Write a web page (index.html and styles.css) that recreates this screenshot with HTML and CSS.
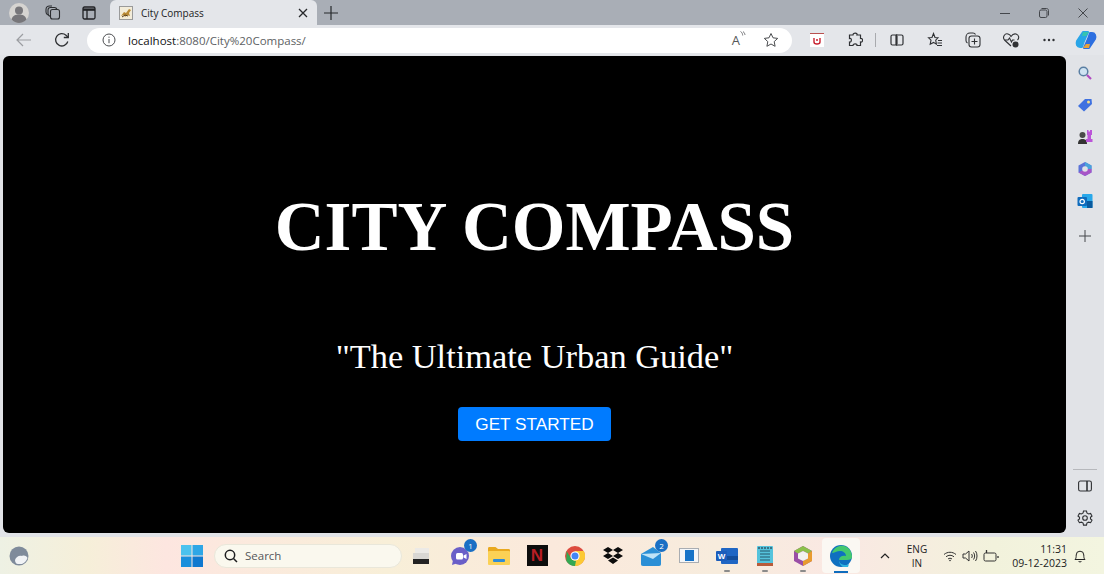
FILE: index.html
```html
<!DOCTYPE html>
<html lang="en">
  <head>
    <meta charset="UTF-8" />
    <meta name="viewport" content="width=device-width, initial-scale=1.0" />
    <title>City Compass</title>
    <link rel="stylesheet" href="styles.css">
  </head>
  <body>
    <div class="titlebar">
      <div class="slot-left">
        <svg class="avatar" viewBox="0 0 20 20" width="20" height="20"><circle cx="10" cy="10" r="10" fill="#d6d4d1"/><circle cx="10" cy="7.500" r="4" fill="#77767a"/><path d="M2.500 16.500c1-4 4-5 7.500-5s6.500 1 7.500 5c-2 2.200-4.500 3.500-7.500 3.500s-5.500-1.300-7.500-3.500z" fill="#77767a"/></svg>
        <svg class="tb-icon" viewBox="0 0 16 16" width="16" height="16" fill="none" stroke="#2b2d30" stroke-width="1.100"><rect x="5.500" y="4.500" width="9" height="9.500" rx="2"/><path d="M5.500 11.500c-1.500-.5-2.500-1.500-2.500-3V5c0-1.500 1-2.500 2.500-2.500h4c1 0 2 .5 2.500 2"/><path d="M3 10C1.800 9.500 1 8.500 1 7V4.500C1 2.500 2.500 1 4.500 1H7"/></svg>
        <svg class="tb-icon" viewBox="0 0 14 14" width="14" height="14" fill="none" stroke="#202124" stroke-width="1.300"><rect x="1" y="1" width="12" height="12" rx="1.500"/><path d="M1 3.600h12" stroke-width="2.400"/><path d="M5 4v9"/></svg>
      </div>
      <div class="tab">
        <svg class="favicon" viewBox="0 0 14 14" width="14" height="14"><rect x=".5" y=".5" width="13" height="13" fill="#f3ecd9" stroke="#9a9a9a"/><path d="M2 10l3-4 2 1 3-4 2 1-2 3 1 3-3-1-2 2-1-2z" fill="#b98a35"/><path d="M3 11l3-2 3 1" fill="none" stroke="#5a3d18"/></svg>
        <span class="tab-title">City Compass</span>
        <svg class="tab-close" viewBox="0 0 10 10" width="10" height="10" stroke="#26282b" stroke-width="1.300"><path d="M1 1l8 8M9 1L1 9"/></svg>
      </div>
      <svg class="new-tab" viewBox="0 0 14 14" width="14" height="14" stroke="#26282b" stroke-width="1.200"><path d="M7 0v14M0 7h14"/></svg>
      <div class="window-controls">
        <svg viewBox="0 0 10 10" width="10" height="10" stroke="#44474c"><path d="M0 5.500h10"/></svg>
        <svg viewBox="0 0 10 10" width="10" height="10" fill="none" stroke="#44474c"><rect x=".5" y="2" width="7.500" height="7.500" rx="1.500"/><path d="M2.500.5h5c1.200 0 2 .8 2 2v5"/></svg>
        <svg viewBox="0 0 10 10" width="10" height="10" stroke="#44474c"><path d="M.5.500l9 9M9.500.500l-9 9"/></svg>
      </div>
    </div>

    <div class="toolbar">
      <svg class="nav-back" viewBox="0 0 16 14" width="16" height="14" fill="none" stroke="#9b9da1" stroke-width="1.200"><path d="M15 7H1M7 1L1 7l6 6"/></svg>
      <svg class="nav-reload" viewBox="0 0 16 16" width="16" height="16" fill="none" stroke="#2f3134" stroke-width="1.300"><path d="M13.800 9.500A6.200 6.200 0 1 1 12 3.200L14 5.200"/><path d="M14.300 1v4.500H9.800"/></svg>
      <div class="address">
        <svg class="info" viewBox="0 0 14 14" width="14" height="14" fill="none" stroke="#4b4d50"><circle cx="7" cy="7" r="6"/><path d="M7 6v4.200M7 3.600v1.200"/></svg>
        <span class="url"><b>localhost</b>:8080/City%20Compass/</span>
        <div class="address-end">
          <span class="read-aloud">A<svg viewBox="0 0 6 7" width="6" height="7" fill="none" stroke="#55575a" stroke-width=".8"><path d="M.5.500c2 1 2 3 2.200 4M3 .5c1.500 1 1.800 2.500 2 3.500"/></svg></span>
          <svg viewBox="0 0 16 16" width="16" height="16" fill="none" stroke="#4b4d50"><path d="M8 1.500l2 4.300 4.700.6-3.500 3.200.9 4.700L8 12l-4.100 2.300.9-4.700L1.300 6.400 6 5.800z"/></svg>
        </div>
      </div>
      <div class="tools">
        <span class="tool"><span class="ext-red"><svg viewBox="0 0 8 8" width="8" height="8" fill="none" stroke="#c8202f" stroke-width="1.400"><path d="M1 1v4c0 1.500 1 2 3 2s3-.5 3-2V1M3 3h2"/></svg></span></span>
        <span class="tool"><svg viewBox="0 0 16 16" width="16" height="16" fill="none" stroke="#2f3134" stroke-width="1.200"><path d="M6 3c0-3 5-2 4 0h3.500v3.500c3-.5 2.500 4.500 0 3.500v3.500H10c.5-2-4-2.500-4 0H2.500V10c2.500.5 2.500-4.500 0-3.500V3z"/></svg></span>
        <span class="tool-sep"></span>
        <span class="tool"><svg viewBox="0 0 14 12" width="14" height="12" fill="none" stroke="#2f3134" stroke-width="1.200"><path d="M6 1H2.500C1.500 1 1 1.500 1 2.500v7c0 1 .5 1.500 1.500 1.500H6zM7 0v12M8 1h3.500c1 0 1.500.5 1.500 1.500v7c0 1-.5 1.500-1.500 1.500H8"/></svg></span>
        <span class="tool"><svg viewBox="0 0 16 16" width="16" height="16" fill="none" stroke="#2f3134" stroke-width="1.100"><path d="M6.500 1.500L8 5.500l3 .3-2.300 2.400.7 4-2.900-1.800-3.300 1.800.8-4L1.500 5.800l3.500-.3zM11 8.500h4M10.500 11h4.500M10 13.500h5"/></svg></span>
        <span class="tool"><svg viewBox="0 0 16 16" width="16" height="16" fill="none" stroke="#2f3134" stroke-width="1.100"><rect x="4" y="4" width="11" height="11" rx="2.500"/><path d="M2.500 11C1.500 10.500 1 9.500 1 8.500V5c0-2 1.500-4 4-4h3c1 0 2 .5 2.500 1.500M9.500 6.500v6M6.500 9.500h6"/></svg></span>
        <span class="tool"><svg viewBox="0 0 18 16" width="18" height="16" fill="none" stroke="#2f3134" stroke-width="1.100"><path d="M9 14L2.500 8C0 5 3 1 6 2c1.500.5 2.500 1.500 3 2.500C10 3 12 1.500 14 2c3 1 3.500 4 1.500 6"/><path d="M3 8h3l1.500-2 2 4 1-2h2"/><circle cx="13.500" cy="12.500" r="3" fill="#2f3134" stroke="none"/></svg></span>
        <span class="tool"><svg viewBox="0 0 12 4" width="12" height="4" fill="#2f3134"><circle cx="1.500" cy="2" r="1.200"/><circle cx="6" cy="2" r="1.200"/><circle cx="10.500" cy="2" r="1.200"/></svg></span>
        <span class="tool tool-copilot"><svg viewBox="0 0 22 20" width="22" height="20" stroke-linejoin="round"><path d="M8 2h5l-4 9-2 6H5C2 17 1 14 2 11z" fill="#29a5e8" stroke="#29a5e8" stroke-width="2"/><path d="M14 18H9l4-9 2-6h2c3 0 4 3 3 6z" fill="#2d6fe0" stroke="#2d6fe0" stroke-width="2"/><path d="M8 2h6l-3 4H7z" fill="#36c4b0"/><path d="M14 18H8l3-4h4z" fill="#e8a23a"/></svg></span>
      </div>
    </div>

    <div class="workspace">
      <main class="page">
        <h1>CITY COMPASS</h1>
        <p class="tagline">"The Ultimate Urban Guide"</p>
        <a class="start-btn" href="#">GET STARTED</a>
      </main>
      <aside class="sidebar">
        <span class="side-slot"><svg viewBox="0 0 14 14" width="14" height="14" fill="none"><circle cx="5.500" cy="5.500" r="4.300" fill="#cfe3f2" stroke="#5a7fa3" stroke-width="1.500"/><path d="M9 9l4 4" stroke="#b04ac0" stroke-width="2.200"/></svg></span>
        <span class="side-slot"><svg viewBox="0 0 16 14" width="16" height="14"><path d="M1 8l7-7h6.500L15 6l-8 7.500z" fill="#3f71e0"/><circle cx="11.500" cy="4" r="1.500" fill="#f3dc8a"/></svg></span>
        <span class="side-slot"><svg viewBox="0 0 16 16" width="16" height="16"><circle cx="5.500" cy="6" r="3" fill="#4a4a4a"/><path d="M1 15c0-4 2-5 4.500-5s4.500 1 4.500 5z" fill="#333"/><path d="M10 1h1.500v1.500H13V1h2v5h-1v4h1.500v3H9v-3h1.500V6H10z" fill="#bb55d8"/></svg></span>
        <span class="side-slot"><svg viewBox="0 0 16 16" width="16" height="16"><path d="M8 1l6.500 3.500v7L8 15l-6.500-3.500v-7z" fill="#5a73d8"/><path d="M8 1l6.500 3.500V8H8z" fill="#4aa3dc"/><path d="M1.500 11.500L8 15l6.500-3.500V8H8z" fill="#a855c7"/><circle cx="8" cy="8" r="2.800" fill="#dfe1e6"/></svg></span>
        <span class="side-slot"><svg viewBox="0 0 16 16" width="16" height="16"><rect x="5" y="1" width="10.500" height="14" rx="1" fill="#28a8ea"/><rect x="10" y="8" width="5.500" height="7" fill="#0a5a9e"/><rect x=".5" y="4" width="9.500" height="9" rx="1" fill="#0f6cbd"/><circle cx="5.200" cy="8.500" r="2.200" fill="none" stroke="#fff" stroke-width="1.200"/></svg></span>
        <span class="side-slot side-plus"><svg viewBox="0 0 12 12" width="12" height="12" stroke="#45474a"><path d="M6 0v12M0 6h12"/></svg></span>
        <div class="side-bottom">
          <span class="side-rule"></span>
          <svg class="side-panel" viewBox="0 0 14 12" width="14" height="12" fill="none" stroke="#2f3134" stroke-width="1.100"><rect x=".6" y="1" width="12.800" height="10" rx="1.800"/><path d="M9 1v10" stroke-width="1.600"/></svg>
          <svg viewBox="0 0 16 16" width="16" height="16" fill="none" stroke="#2f3134" stroke-width="1.100"><circle cx="8" cy="8" r="2.300"/><path d="M6.500 1h3l.4 2 1.700 1 2-.6 1.400 2.600-1.500 1.300v1.600L15 10.200l-1.400 2.500-2-.6-1.700 1-.4 2h-3l-.4-2-1.700-1-2 .6L1 10.200l1.500-1.300V7.300L1 6l1.400-2.600 2 .6 1.700-1z"/></svg>
        </div>
      </aside>
    </div>

    <footer class="taskbar">
      <svg class="weather" viewBox="0 0 20 20" width="20" height="20"><circle cx="10" cy="10" r="9.500" fill="#7f8b9b"/><path d="M6 14c1-3 4-5 7-4 2-1 5 0 5.500 2-1 3-3 5-5.500 6H9c-2 0-3-2-3-4z" fill="#f1f3f6"/></svg>
      <div class="task-center">
        <svg class="win-logo" viewBox="0 0 22 22" width="22" height="22"><rect width="10.500" height="10.500" fill="#4cc2ee"/><rect x="11.500" width="10.500" height="10.500" fill="#2ea6e6"/><rect y="11.500" width="10.500" height="10.500" fill="#1a8fdc"/><rect x="11.500" y="11.500" width="10.500" height="10.500" fill="#0f78cf"/></svg>
        <div class="search"><svg viewBox="0 0 14 14" width="14" height="14" fill="none" stroke="#1d1d1f" stroke-width="1.500"><circle cx="6" cy="6" r="4.700"/><path d="M9.500 9.500L13 13"/></svg><span>Search</span></div>
        <div class="apps">
          <span class="app app-files"><svg viewBox="0 0 18 18" width="18" height="18"><rect x="2" y="1" width="14" height="16" fill="#eceae6"/><rect y="6" width="16" height="6" fill="#d9d7d3"/><rect y="12" width="16" height="5" fill="#232323"/></svg></span>
          <span class="app"><svg viewBox="0 0 22 20" width="22" height="20"><circle cx="10" cy="10" r="9" fill="#6a5fc8"/><path d="M3 14l-1 5 6-2z" fill="#6a5fc8"/><rect x="6" y="7" width="7" height="6.500" rx="1.500" fill="#fff"/><path d="M13.500 9.500l3-1.500v5l-3-1.500z" fill="#fff"/></svg><b class="badge badge-one">1</b></span>
          <span class="app"><svg viewBox="0 0 22 18" width="22" height="18"><path d="M0 1.500C0 .5.500 0 1.500 0h6L10 2h10.500c1 0 1.500.5 1.500 1.500V6H0z" fill="#e9a91f"/><rect y="4" width="22" height="14" rx="1" fill="#fbd155"/><rect x="5" y="12" width="12" height="3" rx="1" fill="#2f8cd8"/></svg></span>
          <span class="app"><span class="netflix">N</span></span>
          <span class="app"><svg viewBox="0 0 20 20" width="20" height="20"><circle cx="10" cy="10" r="10" fill="#dd4b3e"/><path d="M10 20a10 10 0 0 0 8.700-15H10l-3 5z" fill="#fcc934"/><path d="M10 20c-3.700 0-7-2-8.700-5L1.500 5 6 12c1 2 3 3 5 2.800z" fill="#34a853"/><circle cx="10" cy="10" r="4.600" fill="#fff"/><circle cx="10" cy="10" r="3.500" fill="#4285f4"/></svg></span>
          <span class="app"><svg viewBox="0 0 20 18" width="20" height="18" fill="#0c0c0c"><path d="M5 0l5 3-5 3-5-3zM15 0l5 3-5 3-5-3zM5 6l5 3-5 3-5-3zM15 6l5 3-5 3-5-3zM5 13.500l5-3 5 3-5 3.500z"/></svg></span>
          <span class="app"><svg viewBox="0 0 22 20" width="22" height="20"><path d="M1 8l12-7 8 6v11c0 1-.5 2-2 2H3c-1.500 0-2-1-2-2z" fill="#2b8fd6"/><path d="M1 8l20-1-8 6z" fill="#bfe3f7"/></svg><b class="badge badge-two">2</b></span>
          <span class="app"><span class="snip"><i></i></span></span>
          <span class="app app-open"><svg viewBox="0 0 22 18" width="22" height="18"><rect x="5" y="1" width="17" height="16" rx="1" fill="#1f66c4"/><rect x="5" y="9" width="17" height="4" fill="#134e9c"/><rect y="4" width="11" height="10" rx="1" fill="#1b5dbb"/><text x="5.500" y="12" font-size="8" font-weight="700" fill="#fff" text-anchor="middle" font-family="Liberation Sans">W</text></svg></span>
          <span class="app app-open"><svg viewBox="0 0 16 20" width="16" height="20"><rect width="16" height="20" rx="1" fill="#55c3dc"/><rect y="17" width="16" height="3" fill="#b85b3a"/><path d="M3 5h10M3 8h10M3 11h10M3 14h10" stroke="#24566b"/><path d="M2 1v2M5 1v2M8 1v2M11 1v2M14 1v2" stroke="#223"/></svg></span>
          <span class="app app-open"><svg viewBox="0 0 18 20" width="18" height="20"><path d="M9 0l9 5v10l-9 5-9-5V5z" fill="#9a4ea6"/><path d="M9 0l9 5-4 2.500L9 5 4 7.500 0 5z" fill="#8cc04a"/><path d="M18 5v10l-9 5v-5l5-2.500v-5z" fill="#e89b2f"/><path d="M4 7.500L9 5l5 2.500v5L9 15l-5-2.500z" fill="#f2f2ee"/></svg></span>
          <span class="app app-edge"><svg viewBox="0 0 22 22" width="22" height="22"><circle cx="11" cy="11" r="11" fill="#0f70c0"/><path d="M2 8c2-6 8-8 12-7 5 1 8 6 8 11 0 2-2 3-5 3H9c0-3 3-5 7-4 0-3-3-5-6-5S4 8 2 8z" fill="#43c86f"/><path d="M9 15c0 3 3 5 7 5 1 0 2-.5 3-1l-1 3c-4 1-9-1-9-7z" fill="#2fb5e0"/></svg></span>
        </div>
      </div>
      <div class="tray">
        <svg class="tray-chev" viewBox="0 0 10 6" width="10" height="6" fill="none" stroke="#222" stroke-width="1.200"><path d="M1 5l4-4 4 4"/></svg>
        <div class="lang">ENG<br>IN</div>
        <svg viewBox="0 0 14 12" width="14" height="12" fill="none" stroke="#333"><path d="M1 4.500c3.500-3 8.500-3 12 0M3 6.800c2.500-2 5.500-2 8 0M5 9c1.200-1 2.800-1 4 0"/><circle cx="7" cy="10.500" r=".8" fill="#333" stroke="none"/></svg>
        <svg viewBox="0 0 16 14" width="16" height="14" fill="none" stroke="#333"><path d="M1 5v4h2.500L7 12V2L3.500 5zM9.500 5c1 1 1 3 0 4M11.500 3.500c1.500 1.800 1.500 5.200 0 7M13.500 2c2 2.500 2 7.500 0 10"/></svg>
        <svg viewBox="0 0 16 12" width="16" height="12" fill="none" stroke="#333"><rect x="1" y="3" width="12" height="8" rx="1.500"/><path d="M15 6v2M3.500 0v3" stroke-width="1.300"/></svg>
        <div class="clock">11:31<br>09-12-2023</div>
        <svg viewBox="0 0 12 14" width="12" height="14" fill="none" stroke="#222"><path d="M1 10.500c1-1 1.200-2 1.200-4.500a3.800 3.800 0 0 1 7.600 0c0 2.500.2 3.500 1.200 4.500zM4.500 12c.5 1.300 2.500 1.300 3 0"/></svg>
      </div>
    </footer>
  </body>
</html>
```

FILE: styles.css
```css
* {
  box-sizing: border-box;
}

html,
body {
  height: 100%;
}

body {
  margin: 0;
  height: 574px;
  overflow: hidden;
  display: flex;
  flex-direction: column;
  font-family: "Open Sans", "Noto Sans", sans-serif;
  background-color: #e1e3e7;
  color: #222;
}

svg {
  display: block;
  flex: none;
}

/* browser title strip */
.titlebar {
  height: 25px;
  flex: none;
  display: flex;
  align-items: center;
  background-color: #a9aeb6;
}

.slot-left {
  width: 110px;
  display: flex;
  align-items: center;
  padding-left: 9px;
}

.avatar {
  margin-right: 16px;
}

.tb-icon {
  margin-right: 21px;
}

.tab {
  width: 207px;
  height: 25px;
  display: flex;
  align-items: center;
  padding: 0 9px;
  background-color: #e4e6ea;
  border-radius: 6px 6px 0 0;
}

.tab-title {
  margin-left: 8px;
  font-size: 10px;
  flex: 1;
}

.new-tab {
  margin-left: 7px;
}

.window-controls {
  margin-left: auto;
  display: flex;
  gap: 29px;
  padding-right: 16px;
}

/* address bar row */
.toolbar {
  height: 30px;
  flex: none;
  display: flex;
  align-items: center;
  padding-left: 16px;
  background-color: #e4e6ea;
}

.nav-reload {
  margin-left: 22px;
}

.address {
  width: 705px;
  height: 25px;
  margin-left: 17px;
  display: flex;
  align-items: center;
  padding: 0 13px 0 15px;
  background-color: #fff;
  border-radius: 13px;
}

.url {
  margin-left: 12px;
  font-size: 11.5px;
  color: #5d5f63;
}

.url b {
  font-weight: 400;
  color: #111;
}

.address-end {
  margin-left: auto;
  display: flex;
  align-items: center;
  gap: 17px;
}

.read-aloud {
  display: flex;
  font-size: 13px;
  color: #55575a;
}

.tools {
  display: flex;
  align-items: center;
  margin-left: 6px;
}

.tool {
  width: 38px;
  display: flex;
  align-items: center;
  justify-content: center;
}

.tool-copilot {
  width: 36px;
}

.ext-red {
  width: 14px;
  height: 14px;
  display: flex;
  align-items: center;
  justify-content: center;
  background-color: #fff;
  border-top: 1px solid #b9504f;
}

.tool-sep {
  width: 1px;
  height: 14px;
  margin: 0 2px 0 1px;
  background-color: #a8aaae;
}

/* page + edge sidebar */
.workspace {
  flex: 1;
  min-height: 0;
  display: flex;
  padding: 1px 0 4px 3px;
}

.page {
  flex: 1;
  display: flex;
  flex-direction: column;
  align-items: center;
  background-color: #000;
  border-radius: 6px;
  color: #fff;
  font-family: "Liberation Serif", serif;
}

h1 {
  margin: 133px 0 0;
  font-size: 69px;
  line-height: 76px;
  font-weight: 700;
}

.tagline {
  margin: 71px 0 0;
  font-size: 34.4px;
  line-height: 40px;
}

.start-btn {
  margin-top: 31px;
  width: 153px;
  height: 34px;
  display: flex;
  align-items: center;
  justify-content: center;
  background-color: #007bff;
  border-radius: 4px;
  color: #fff;
  font-family: "Liberation Sans", sans-serif;
  font-size: 17.2px;
  text-decoration: none;
}

.sidebar {
  width: 38px;
  flex: none;
  display: flex;
  flex-direction: column;
  align-items: center;
  padding-top: 1px;
}

.side-slot {
  height: 32px;
  display: flex;
  align-items: center;
}

.side-plus {
  margin-top: 3px;
}

.side-bottom {
  margin-top: auto;
  display: flex;
  flex-direction: column;
  align-items: center;
  padding-bottom: 7px;
}

.side-rule {
  width: 24px;
  height: 1px;
  margin-bottom: 10px;
  background-color: #b6b8bc;
}

.side-panel {
  margin-bottom: 18px;
}

/* windows taskbar */
.taskbar {
  height: 37px;
  flex: none;
  display: flex;
  align-items: center;
  padding-left: 9px;
  background: linear-gradient(90deg, #eef1e4 0%, #f6efd9 8%, #fde6e0 15%, #f8efd8 35%, #fbe9dc 50%, #f7ecdd 65%, #fae8e3 76%, #f2f2dc 90%, #f3f5e0 100%);
}

.task-center {
  display: flex;
  align-items: center;
  margin-left: 152px;
}

.search {
  width: 188px;
  height: 24px;
  margin-left: 11px;
  display: flex;
  align-items: center;
  gap: 7px;
  padding-left: 9px;
  background-color: #faf8ee;
  border: 1px solid #e9e7da;
  border-radius: 12px;
  font-size: 11.5px;
  color: #55575a;
}

.apps {
  display: flex;
  align-items: center;
  margin-left: 2px;
}

.app {
  position: relative;
  width: 38px;
  height: 37px;
  display: flex;
  align-items: center;
  justify-content: center;
}

.app-files {
  padding-right: 2px;
}

.app-open::after {
  content: "";
  position: absolute;
  bottom: 2px;
  left: 16px;
  width: 6px;
  height: 2px;
  border-radius: 1px;
  background-color: #8b8b8b;
}

.app-edge {
  background-color: #fbf8f3;
  border-radius: 4px;
  height: 35px;
}

.app-edge::after {
  content: "";
  position: absolute;
  bottom: 0;
  left: 12px;
  width: 14px;
  height: 2px;
  background-color: #0f6cbd;
}

.badge {
  position: absolute;
  top: 2px;
  width: 13px;
  height: 13px;
  border-radius: 50%;
  background-color: #1a6fc4;
  color: #fff;
  font-size: 8px;
  font-weight: 400;
  line-height: 13px;
  text-align: center;
}

.badge-one {
  left: 22px;
}

.badge-two {
  left: 23px;
}

.netflix {
  width: 21px;
  height: 21px;
  background-color: #0d0d0d;
  color: #b81d24;
  font-family: "Liberation Sans", sans-serif;
  font-size: 17px;
  font-weight: 700;
  line-height: 21px;
  text-align: center;
}

.snip {
  width: 20px;
  height: 15px;
  display: flex;
  justify-content: center;
  align-items: center;
  background-color: #f4f6f8;
  border: 1px solid #a9adb2;
}

.snip i {
  width: 9px;
  height: 11px;
  background-color: #1673c8;
}

.tray {
  margin-left: auto;
  display: flex;
  align-items: center;
  gap: 5px;
  padding-right: 18px;
}

.tray-chev {
  margin-right: 9px;
}

.lang {
  width: 26px;
  margin-right: 8px;
  font-size: 10px;
  line-height: 14px;
  text-align: center;
}

.clock {
  width: 59px;
  margin-left: 4px;
  margin-right: 2px;
  font-size: 10.5px;
  line-height: 14px;
  text-align: right;
}
```
